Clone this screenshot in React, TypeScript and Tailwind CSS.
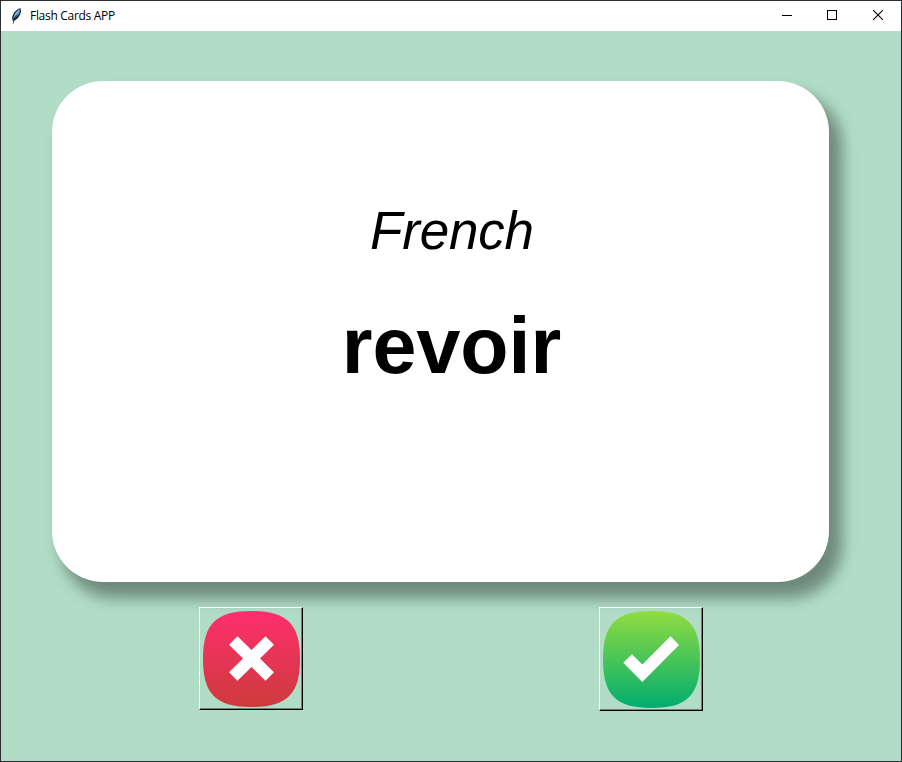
import React from "react";

function Feather() {
  return (
    <svg width="12" height="16" viewBox="0 0 12 16" className="block">
      <path d="M9.6 .2 C6 .8 2 4.6 1.2 9.4 L1.6 13 L3.6 12.4 C7.6 10.4 11 5.2 9.6 .2Z" fill="#17202c" />
      <path d="M8.9 1.2 C5.4 3 2.6 6.6 2.3 10.6 C6.2 9 9.6 5 8.9 1.2Z" fill="#5b93d6" />
      <path d="M5.6 7 L3.3 11 L2.2 15.6" fill="none" stroke="#1c2430" strokeWidth=".8" />
      <path d="M8 1.8 L3.6 7.4" fill="none" stroke="#b9d4ee" strokeWidth=".9" />
    </svg>
  );
}

function TitleBar() {
  return (
    <header className="flex h-[30px] shrink-0 items-center bg-white text-black">
      <div className="ml-[10px] w-[19px] pb-[1px]">
        <Feather />
      </div>
      <h1 className="flex-1 font-['Open_Sans','Noto_Sans',sans-serif] text-[12px] leading-4 tracking-[-0.3px]">
        Flash Cards APP
      </h1>
      <div className="flex h-full pb-[2px]">
        <button aria-label="Minimize" className="flex w-[45px] items-center justify-center">
          <svg width="10" height="10" shapeRendering="crispEdges"><path d="M0 5h10v1H0z" /></svg>
        </button>
        <button aria-label="Maximize" className="flex w-[46px] items-center justify-center">
          <svg width="10" height="10" shapeRendering="crispEdges"><path d="M.5.5h9v9h-9z" fill="none" stroke="#000" /></svg>
        </button>
        <button aria-label="Close" className="flex w-[46px] items-center justify-center">
          <svg width="10" height="10"><path d="M0 0L10 10M10 0L0 10" stroke="#000" strokeWidth="1.1" /></svg>
        </button>
      </div>
    </header>
  );
}

const BLOB = "M48.5 0C84 0 97 13 97 48.5S84 97 48.5 97 0 84 0 48.5 13 0 48.5 0Z";

function RaisedButton({ label, className, children }: { label: string; className: string; children: React.ReactNode }) {
  return (
    <button
      aria-label={label}
      className={`flex w-[104px] items-start border border-t-white border-l-white border-r-black border-b-black pt-[3px] pl-[3px] shadow-[inset_-1px_-1px_0_#6a8577] ${className}`}
    >
      {children}
    </button>
  );
}

export default function App() {
  return (
    <div className="flex h-[762px] w-[902px] flex-col overflow-hidden border border-[#2b2e30] bg-[#b1ddc6]">
      <TitleBar />
      <main className="flex flex-1 flex-col pt-[50px]">
        <section className="ml-[51px] flex h-[501px] w-[777px] shrink-0 flex-col items-center gap-[40px] rounded-[51px] bg-white pt-[120px] pl-[22px] font-['Liberation_Sans',Arial,sans-serif] text-black shadow-[11px_14px_15px_2px_rgba(0,0,0,0.38)]">
          <p className="pl-[1px] text-[53px] leading-[60px] tracking-[-0.2px] italic">French</p>
          <p className="text-[79px] leading-[90px] font-bold">revoir</p>
        </section>
        <div className="mt-[25px] ml-[198px] flex items-start gap-[296px]">
          <RaisedButton label="Unknown" className="h-[103px]">
            <svg width="97" height="96" viewBox="0 0 97 97" preserveAspectRatio="none" className="block">
              <defs>
                <linearGradient id="red" x1="0" y1="0" x2="0" y2="1">
                  <stop offset="0" stopColor="#ff2f6d" />
                  <stop offset="1" stopColor="#cd3a3d" />
                </linearGradient>
              </defs>
              <path d={BLOB} fill="url(#red)" />
              <path d="M34.5 25.5L48.5 39.5L62.5 25.5L71 34L57 48L71 62L62.5 70.5L48.5 56.5L34.5 70.5L26 62L40 48L26 34Z" fill="#fff" />
            </svg>
          </RaisedButton>
          <RaisedButton label="Known" className="h-[104px]">
            <svg width="97" height="97" viewBox="0 0 97 97" className="block">
              <defs>
                <linearGradient id="green" x1="0" y1="0" x2="0" y2="1">
                  <stop offset="0" stopColor="#91dc40" />
                  <stop offset="1" stopColor="#00ad70" />
                </linearGradient>
              </defs>
              <path d={BLOB} fill="url(#green)" />
              <path d="M20.3 51.7L29 43.3L39.3 53.5L67.5 25.3L76 34L39.3 71Z" fill="#fff" />
            </svg>
          </RaisedButton>
        </div>
      </main>
    </div>
  );
}
